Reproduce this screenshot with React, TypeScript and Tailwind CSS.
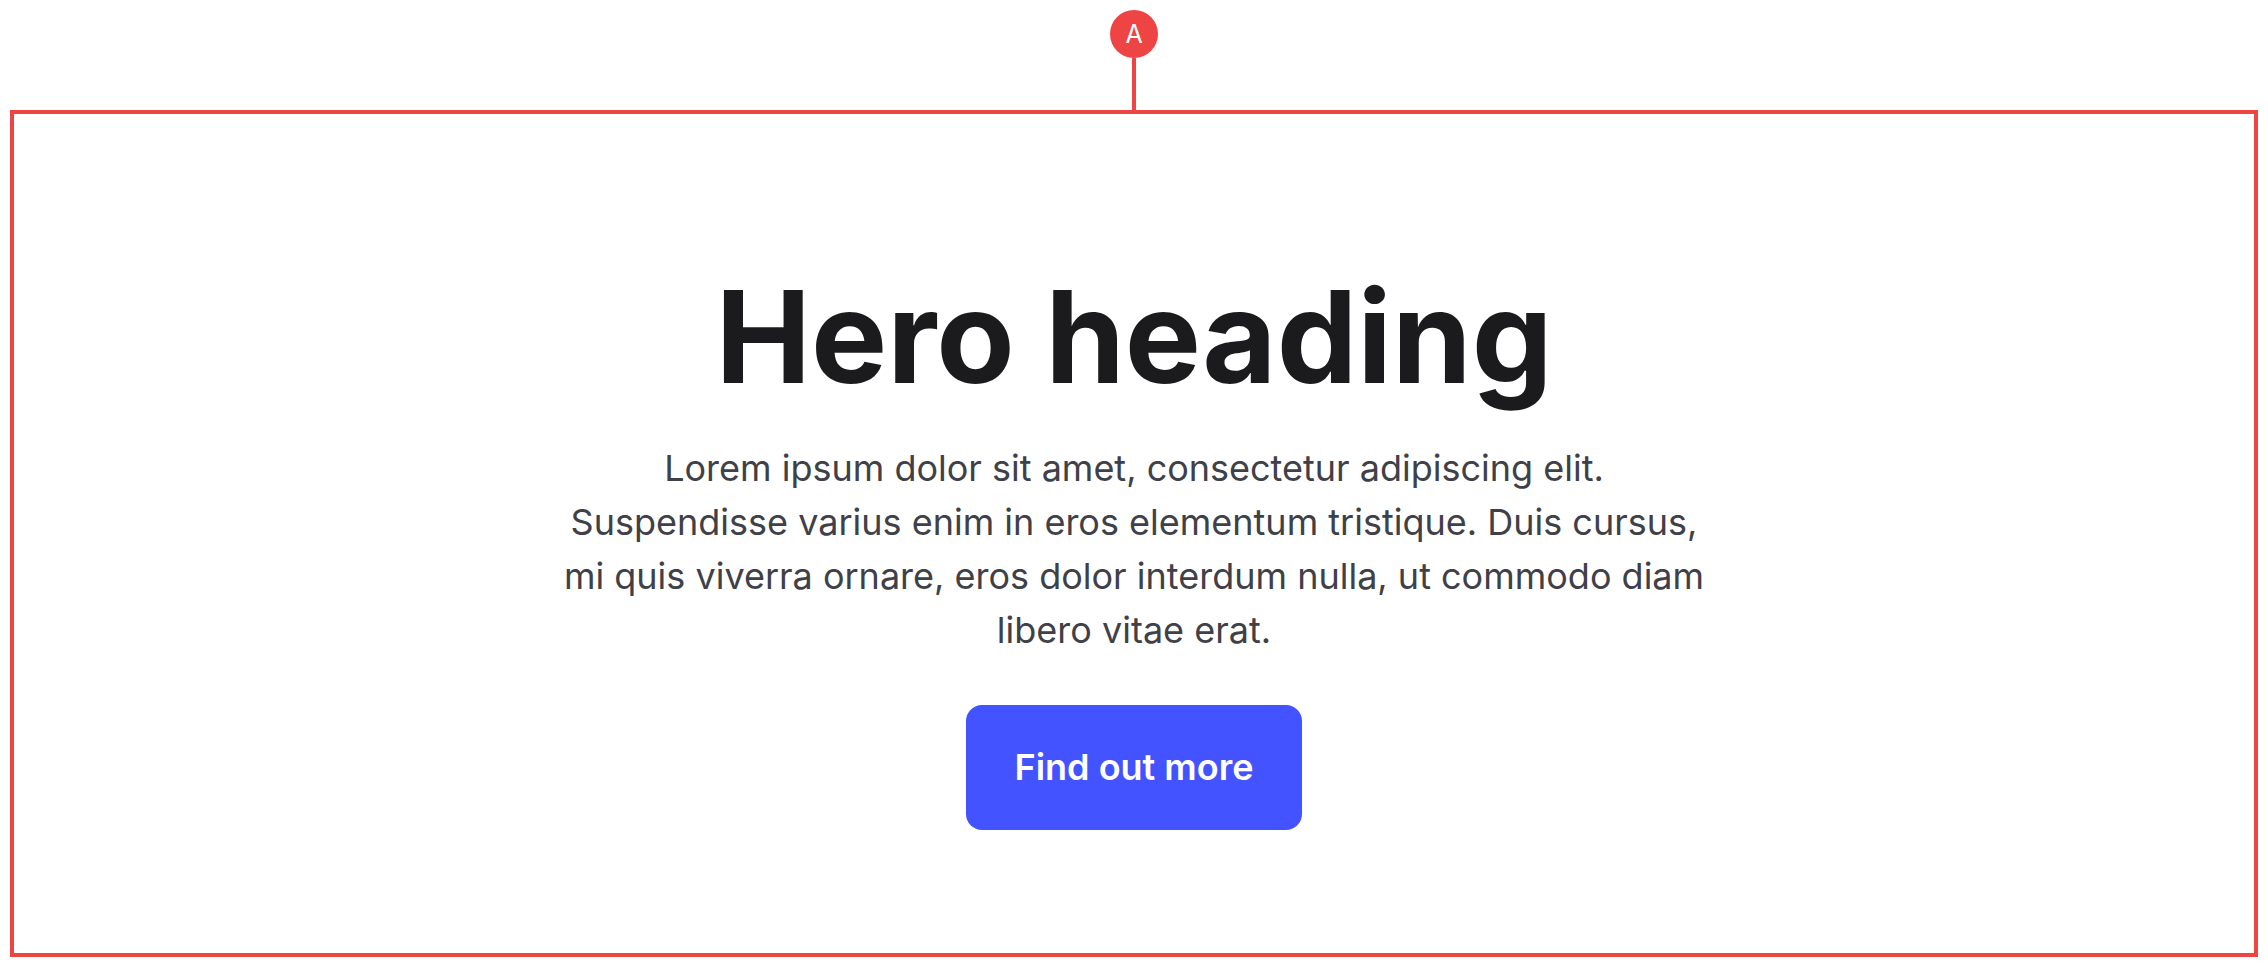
import React from 'react';

const App: React.FC = () => {
  return (
    <div className="min-h-screen bg-white font-['Inter',sans-serif] flex flex-col items-center pt-[10px]">
      {/* annotation marker */}
      <div className="w-12 h-12 rounded-full bg-[#ef4444] text-white text-[25px] leading-none flex items-center justify-center">
        A
      </div>
      <div className="w-1 h-[52px] bg-[#ef4444]" />

      <section className="self-stretch mx-[10px] h-[847px] border-4 border-[#ef4444] flex flex-col items-center pt-[146px]">
        <h1 className="text-[128px] leading-[1.2] font-bold text-[#1b1b1d]">
          Hero heading
        </h1>
        <p className="mt-[27px] max-w-[1150px] text-center text-[36px] leading-[54px] text-[#404048]">
          Lorem ipsum dolor sit amet, consectetur adipiscing elit.
          <br />
          Suspendisse varius enim in eros elementum tristique. Duis cursus, mi quis viverra ornare, eros dolor
          interdum nulla, ut commodo diam libero vitae erat.
        </p>
        <button className="mt-12 h-[125px] px-12 rounded-2xl bg-[#4353ff] text-white text-[36px] font-semibold">
          Find out more
        </button>
      </section>
    </div>
  );
};

export default App;
